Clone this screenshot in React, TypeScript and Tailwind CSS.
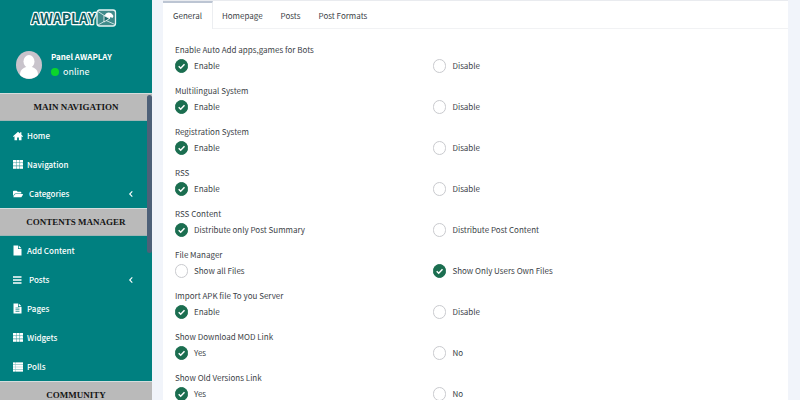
import React, { useState } from 'react';
import { FaFolderOpen } from 'react-icons/fa';

// ─────────────────────────────────────────────
// Icons
// ─────────────────────────────────────────────
function HomeIcon() {
  return (
    <svg viewBox="0 0 10 10" className="size-2.5" fill="currentColor" aria-hidden="true">
      <path d="M5 .8L0 5.200l.6.700L1.500 5.200V9.200h2.600V6.500h1.800v2.700h2.600V5.200l.9.700.6-.7L8.400 3.700V1.300H7.100v1.300z" />
    </svg>
  );
}

function GridIcon() {
  return (
    <svg viewBox="0 0 10 9" className="h-[9px] w-2.5" fill="currentColor" aria-hidden="true">
      <path d="M0 0h10v8.700H0z" fillOpacity="0.250" />
      {[0, 3.1, 6.2].map((y) =>
        [0, 3.5, 7].map((x) => <rect key={`${x}-${y}`} x={x} y={y} width="3" height="2.500" rx="0.300" />),
      )}
    </svg>
  );
}

function FileIcon({ lines }: { lines?: boolean }) {
  return (
    <svg viewBox="0 0 9 11" className="h-[11px] w-[9px]" fill="currentColor" aria-hidden="true">
      <path d="M.5.5H5v3.500h3.500v6.500h-8zM5.700.5l2.800 2.800H5.700z" />
      {lines && <path d="M2.500 5h4M2.500 6.700h4M2.500 8.400h4" stroke="#008080" strokeWidth="0.700" />}
    </svg>
  );
}

function BarsIcon() {
  return (
    <svg viewBox="0 0 10 10" className="size-2.5" fill="currentColor" aria-hidden="true">
      <path d="M0 1.200h8.500v1.500H0zM0 4.200h8.500v1.500H0zM0 7.200h8.500v1.500H0z" />
    </svg>
  );
}

function ListIcon() {
  return (
    <svg viewBox="0 0 10 10" className="size-2.5" fill="currentColor" aria-hidden="true">
      <path d="M0 .5h10v9H0z" fillOpacity="0.550" />
      <path d="M0 .5h2v1.800H0zM2.500.5H10v1.800H2.500zM0 2.900h2v1.800H0zM2.500 2.900H10v1.800H2.500zM0 5.300h2v1.800H0zM2.500 5.300H10v1.800H2.500zM0 7.700h2v1.800H0zM2.500 7.700H10v1.800H2.500z" />
    </svg>
  );
}

function ChevronIcon() {
  return (
    <svg viewBox="0 0 6 8" className="h-2 w-1.5" fill="none" stroke="currentColor" aria-hidden="true">
      <path d="M4.300 1.300L1.700 4l2.600 2.700" strokeWidth="1.100" />
    </svg>
  );
}

// ─────────────────────────────────────────────
// Data
// ─────────────────────────────────────────────
interface NavItem {
  label: string;
  icon: React.ReactNode;
  children?: boolean;
}

interface NavSection {
  title: string;
  items: NavItem[];
}

interface Setting {
  id: string;
  title: string;
  options: [string, string];
  selected: 0 | 1;
}

const SECTIONS: NavSection[] = [
  {
    title: 'MAIN NAVIGATION',
    items: [
      { label: 'Home', icon: <HomeIcon /> },
      { label: 'Navigation', icon: <GridIcon /> },
      { label: 'Categories', icon: <FaFolderOpen size={10} />, children: true },
    ],
  },
  {
    title: 'CONTENTS MANAGER',
    items: [
      { label: 'Add Content', icon: <FileIcon /> },
      { label: 'Posts', icon: <BarsIcon />, children: true },
      { label: 'Pages', icon: <FileIcon lines /> },
      { label: 'Widgets', icon: <GridIcon /> },
      { label: 'Polls', icon: <ListIcon /> },
    ],
  },
  { title: 'COMMUNITY', items: [] },
];

const TABS = ['General', 'Homepage', 'Posts', 'Post Formats'];

const SETTINGS: Setting[] = [
  { id: 'bots', title: 'Enable Auto Add apps,games for Bots', options: ['Enable', 'Disable'], selected: 0 },
  { id: 'multilingual', title: 'Multilingual System', options: ['Enable', 'Disable'], selected: 0 },
  { id: 'registration', title: 'Registration System', options: ['Enable', 'Disable'], selected: 0 },
  { id: 'rss', title: 'RSS', options: ['Enable', 'Disable'], selected: 0 },
  { id: 'rss-content', title: 'RSS Content', options: ['Distribute only Post Summary', 'Distribute Post Content'], selected: 0 },
  { id: 'files', title: 'File Manager', options: ['Show all Files', 'Show Only Users Own Files'], selected: 1 },
  { id: 'apk', title: 'Import APK file To you Server', options: ['Enable', 'Disable'], selected: 0 },
  { id: 'mod', title: 'Show Download MOD Link', options: ['Yes', 'No'], selected: 0 },
  { id: 'old', title: 'Show Old Versions Link', options: ['Yes', 'No'], selected: 0 },
];

// ─────────────────────────────────────────────
// Sidebar
// ─────────────────────────────────────────────
function Logo() {
  return (
    <svg viewBox="0 0 88 22" className="h-[22px] w-[88px]" role="img" aria-label="AWAPLAY">
      <text
        x="1"
        y="15.500"
        fontFamily="'Noto Sans CJK SC', sans-serif"
        fontSize="14"
        fontWeight="700"
        fill="#0b5f63"
        stroke="#ffffff"
        strokeWidth="2.400"
        strokeLinejoin="round"
        paintOrder="stroke"
      >
        AWAPLAY
      </text>
      <rect x="67" y="2" width="18.500" height="16" rx="2.500" fill="#3f8a8a" stroke="#e6f4f4" strokeWidth="1.300" />
      <path d="M68 3.500l7 4.500v5l-7 4M76 12.500l9 4" fill="none" stroke="#d5eaea" strokeWidth="0.900" />
      <path d="M75 7c1-3 6-4 8.500 1l-1 2-2-1-1 2-2-2-2 1z" fill="#ffffff" />
      <path d="M74 7.500v6.500l5.500-3.500z" fill="#1d6c6d" stroke="#ffffff" strokeWidth="0.800" />
    </svg>
  );
}

function Avatar() {
  return (
    <svg viewBox="0 0 26 28" className="h-7 w-[26px] shrink-0" aria-hidden="true">
      <ellipse cx="13" cy="14" rx="13" ry="14" fill="#c8c3cb" />
      <ellipse cx="13" cy="10.500" rx="5.500" ry="6.500" fill="#ffffff" />
      <path d="M4 24c0-5 3-7 6-8h6c3 1 6 3 6 8-5 5-13 5-18 0z" fill="#ffffff" />
    </svg>
  );
}

function Sidebar() {
  return (
    <aside className="relative w-38 shrink-0 bg-[#008080] text-white">
      <div className="flex h-[93px] flex-col">
        <div className="flex justify-center pt-2 pr-1">
          <Logo />
        </div>
        <div className="flex items-center gap-[9px] px-4 pt-5">
          <Avatar />
          <div>
            <p className="text-[8px] leading-[14px] font-bold">Panel AWAPLAY</p>
            <p className="flex items-center gap-1 text-[9px] leading-4">
              <span className="h-2 w-2 rounded-full bg-[#0bd62b]" />
              online
            </p>
          </div>
        </div>
      </div>

      <nav>
        {SECTIONS.map((section) => (
          <section key={section.title}>
            <h2 className="h-7 border-y border-t-[#d5dddd] border-b-[#9fb5b5] bg-[#bababa] text-center font-['Liberation_Serif',serif] text-[9px] leading-[26px] font-bold text-[#151515]">
              {section.title}
            </h2>
            {section.items.map(({ label, icon, children }) => (
              <a
                key={label}
                href="#"
                className="flex h-[29px] items-center gap-1 pr-[18px] pl-[13px] text-[8px] font-medium hover:bg-[#007272]"
              >
                <span className="flex w-2.5 justify-start">{icon}</span>
                <span className={children ? 'flex-1 pl-0.5' : 'flex-1'}>{label}</span>
                {children && <ChevronIcon />}
              </a>
            ))}
          </section>
        ))}
      </nav>

      {/* Scroll thumb lying over the menu */}
      <div className="absolute top-[95px] right-0 h-[158px] w-[5px] rounded-full bg-[#4d6078]" />
    </aside>
  );
}

// ─────────────────────────────────────────────
// Settings
// ─────────────────────────────────────────────
interface RadioProps {
  name: string;
  label: string;
  checked: boolean;
  onChange: () => void;
}

function Radio({ name, label, checked, onChange }: RadioProps) {
  return (
    <label className="flex cursor-pointer items-center gap-1.5">
      <span className="grid">
        <input
          type="radio"
          name={name}
          checked={checked}
          onChange={onChange}
          className="col-start-1 row-start-1 h-3.5 w-[13px] appearance-none rounded-full border border-[#c9cace] bg-white checked:border-[#1b6e50] checked:bg-[#1b6e50]"
        />
        {checked && (
          <svg viewBox="0 0 13 14" className="pointer-events-none col-start-1 row-start-1 h-3.5 w-[13px]">
            <path d="M3.700 7.200l2 2 3.800-4" fill="none" stroke="#ffffff" strokeWidth="1.500" />
          </svg>
        )}
      </span>
      {label}
    </label>
  );
}

function SettingRow({ setting }: { setting: Setting }) {
  const [selected, setSelected] = useState<number>(setting.selected);

  return (
    <fieldset className="h-[41px]">
      <legend className="leading-4">{setting.title}</legend>
      <div className="flex h-4 items-center">
        {setting.options.map((option, i) => (
          <div key={option} className="w-[43%]">
            <Radio
              name={setting.id}
              label={option}
              checked={selected === i}
              onChange={() => setSelected(i)}
            />
          </div>
        ))}
      </div>
    </fieldset>
  );
}

export default function App() {
  const [tab, setTab] = useState('General');

  return (
    <div className="flex h-screen overflow-hidden bg-[#f1f4fa] font-['Noto_Sans_CJK_SC',sans-serif]">
      <Sidebar />

      <main className="min-w-0 flex-1 pr-3 pl-[11px]">
        <div className="min-h-full border-t border-[#e9ebef] bg-white text-[8px] text-[#3c3f48]">
          <div role="tablist" className="flex h-7 border-b border-[#f1f2f4]">
            {TABS.map((t) => (
              <button
                key={t}
                role="tab"
                aria-selected={tab === t}
                onClick={() => setTab(t)}
                className={
                  tab === t
                    ? '-mb-px border-t-2 border-r border-t-[#bcc5d3] border-r-[#eceef1] bg-white px-2.5'
                    : 'border-t-2 border-transparent px-[9px]'
                }
              >
                {t}
              </button>
            ))}
          </div>

          <form className="px-3 pt-[13px]">
            {SETTINGS.map((s) => (
              <SettingRow key={s.id} setting={s} />
            ))}
          </form>
        </div>
      </main>
    </div>
  );
}
